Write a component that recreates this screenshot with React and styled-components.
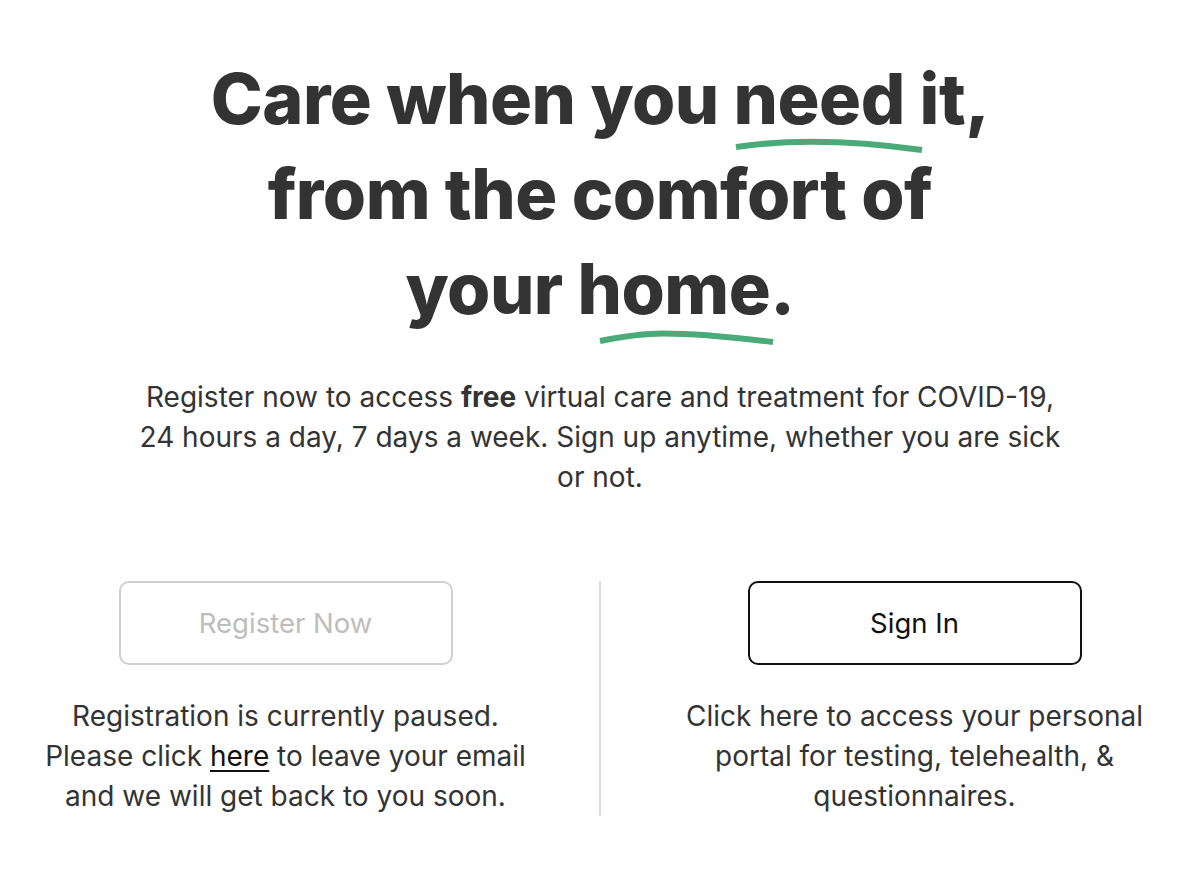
import React from "react";
import styled, { createGlobalStyle } from "styled-components";

const Global = createGlobalStyle`
  html, body { margin: 0; padding: 0; background: #fff; }
  body { font-family: Inter, "Noto Sans", sans-serif; color: #333; }
`;

const Page = styled.main`
  width: 1200px;
  padding-top: 51px;
  display: flex;
  flex-direction: column;
  align-items: center;
`;

const Headline = styled.h1`
  margin: 0;
  font-family: Inter, sans-serif;
  font-weight: 800;
  font-size: 70px;
  line-height: 95px;
  letter-spacing: -0.5px;
  color: #333;
  text-align: center;
`;

const Marked = styled.span`
  position: relative;
  display: inline-block;
`;

const Swoosh = styled.svg`
  position: absolute;
  left: ${(p) => p.$left}px;
  top: ${(p) => p.$top}px;
  width: ${(p) => p.$w}px;
  height: 18px;
  overflow: visible;
`;

const Lead = styled.p`
  margin: 41px 0 0;
  font-size: 28px;
  line-height: 40px;
  color: #333;
  text-align: center;
  b { font-weight: 700; }
`;

const Split = styled.section`
  margin-top: 84px;
  width: 1200px;
  display: grid;
  grid-template-columns: 1fr 2px 1fr;
  column-gap: 28px;
`;

const Column = styled.div`
  display: flex;
  flex-direction: column;
  align-items: center;
`;

const Divider = styled.div`
  background: #dcdcdc;
  width: 2px;
`;

const Button = styled.button`
  box-sizing: border-box;
  width: 334px;
  height: 84px;
  border-radius: 10px;
  background: #fff;
  border: 2px solid ${(p) => (p.$disabled ? "#cfcfcf" : "#111")};
  color: ${(p) => (p.$disabled ? "#bdbdbd" : "#111")};
  font-family: Inter, sans-serif;
  font-size: 27.5px;
  cursor: ${(p) => (p.$disabled ? "default" : "pointer")};
`;

const Note = styled.p`
  margin: 31px 0 0;
  font-size: 28px;
  line-height: 40px;
  text-align: center;
  color: #333;
  a { color: #111; text-decoration: underline; text-underline-offset: 4px; }
`;

function Underline({ left, top, w, d }) {
  return (
    <Swoosh $left={left} $top={top} $w={w} viewBox={`0 0 ${w} 18`}>
      <path d={d} fill="none" stroke="#4aaa78" strokeWidth="6" strokeLinecap="butt" />
    </Swoosh>
  );
}

export default function App() {
  return (
    <>
      <Global />
      <Page>
        <Headline>
          Care when you{" "}
          <Marked>
            need it
            <Underline left={2} top={86} w={186} d="M0 10 C 40 4, 100 1, 186 13" />
          </Marked>
          ,
          <br />
          from the comfort of
          <br />
          your{" "}
          <Marked>
            home
            <Underline left={22} top={88} w={173} d="M0 12 C 25 7, 45 4.5, 63 4.5 C 100 4.5, 140 9, 173 13" />
          </Marked>
          .
        </Headline>
        <Lead>
          Register now to access <b>free</b> virtual care and treatment for COVID-19,
          <br />
          24 hours a day, 7 days a week. Sign up anytime, whether you are sick
          <br />
          or not.
        </Lead>
        <Split>
          <Column>
            <Button $disabled disabled>Register Now</Button>
            <Note>
              Registration is currently paused.
              <br />
              Please click <a href="#">here</a> to leave your email
              <br />
              and we will get back to you soon.
            </Note>
          </Column>
          <Divider />
          <Column>
            <Button>Sign In</Button>
            <Note>
              Click here to access your personal
              <br />
              portal for testing, telehealth, &amp;
              <br />
              questionnaires.
            </Note>
          </Column>
        </Split>
      </Page>
    </>
  );
}
